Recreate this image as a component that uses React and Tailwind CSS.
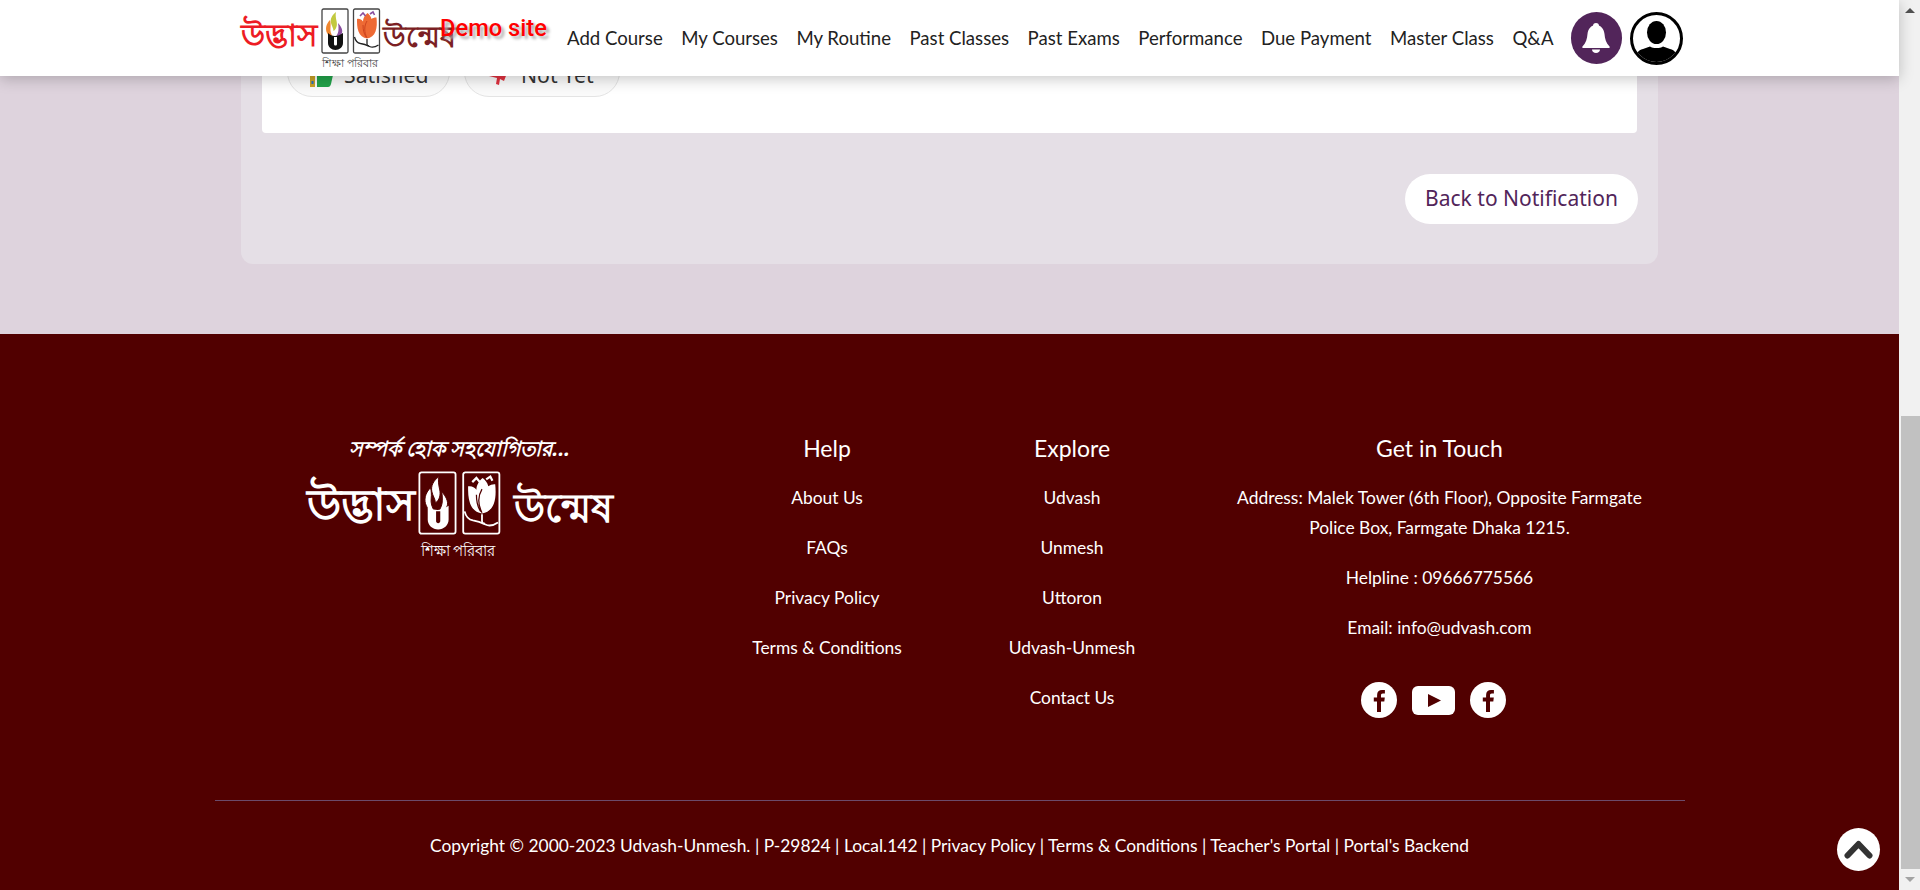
import React from 'react';

const navItems = ['Add Course', 'My Courses', 'My Routine', 'Past Classes', 'Past Exams', 'Performance', 'Due Payment', 'Master Class', 'Q&A'];
const helpLinks = ['About Us', 'FAQs', 'Privacy Policy', 'Terms & Conditions'];
const exploreLinks = ['Udvash', 'Unmesh', 'Uttoron', 'Udvash-Unmesh', 'Contact Us'];

// two framed marks of the logo, full colour in the header and plain white in the footer
const LogoBoxes = ({ frame, tone }) => {
    const gap = tone ? 'none' : '#510000';
    return (
        <svg className="h-full w-auto" viewBox="0 0 60 46" fill="none" xmlns="http://www.w3.org/2000/svg">
            <rect x="1" y="1" width="26" height="44" rx="1.5" stroke={frame} strokeWidth="1.3" />
            <rect x="32.5" y="1" width="26" height="44" rx="1.5" stroke={frame} strokeWidth="1.3" />
            <path d="M15 4c-4 3-6 7-5 11 .6 3 2.500 5 2.500 8 3-2 4-6 3-10-.6-3-1.200-6-.5-9Z" fill={tone ? '#c2c93f' : frame} stroke={gap} strokeWidth=".7" />
            <path d="M9 12c-4 4-5 9-3 13 1 2.500 3 3.500 6 4-2-3-3-6-2.500-9.500.2-2.500.2-5-.5-7.500Z" fill={tone ? '#f0872f' : frame} stroke={gap} strokeWidth=".7" />
            <path d="M17 15c3 3 5 7 4 10-.7 2.500-3 4-6.500 4.500 2-3 3-5.500 3-8.500 0-2 0-4-.5-6Z" fill={tone ? '#8a4f9e' : frame} stroke={gap} strokeWidth=".7" />
            <path d="M7 25c2 2 4 3 7 3s5-1 8-3v10c0 4-3.500 7-7.500 7S7 39 7 35V25Z" fill={tone ? '#111111' : frame} />
            <path d="M13 29v7c0 1 .7 1.500 1.500 1.500S16 37 16 36v-7h-3Z" fill={tone ? '#ffffff' : '#510000'} />
            <path d="M36 11c2.500-.5 4.500.5 6 2.500 0-3.500 2-6.500 4.500-8.500 2 1.500 3.500 3.500 4 6 1.500-1.200 3.500-1.700 5-1.500.5 5 .5 10-1 14-1.500 4-4.500 6.500-8.500 7-4-.5-7-3-8.500-7-1.500-4-1.500-8.500-1.500-12.500Z" fill={tone ? '#ee6a34' : frame} />
            <path d="M39 8l3-3 2.500 3M49 6l3-2 1.500 3" stroke={tone ? '#8a4f9e' : frame} strokeWidth="1.600" />
            <path d="M46 13c-3 5-3 11 0 17M42 17c0 5 1 9 3 12" stroke={tone ? '#c9401c' : '#510000'} strokeWidth=".9" />
            <path d="M46 31v5c0 1.500 1 2 2 1.500" stroke={tone ? '#222222' : frame} strokeWidth="1.300" />
            <path d="M33.500 29c1 4 3 6 6 6.500 3.500.5 6 1.500 9 3 3 1.500 6 .5 9-1.500" stroke={tone ? '#222222' : frame} strokeWidth="1.300" />
        </svg>
    );
};

const FacebookDisc = () => (
    <svg className="h-9 w-9" viewBox="0 0 36 36" xmlns="http://www.w3.org/2000/svg">
        <circle cx="18" cy="18" r="18" fill="#ffffff" />
        <path d="M20 30V19.500h3.300l.5-3.900H20v-2.300c0-1.100.3-1.900 1.900-1.900h2V8.100c-.4 0-1.500-.2-2.900-.2-2.900 0-4.900 1.800-4.900 5v2.700h-3.300v3.900H16V30h4Z" fill="#510000" />
    </svg>
);

const YoutubeBadge = () => (
    <svg className="h-[29px] w-[43px]" viewBox="0 0 43 29" xmlns="http://www.w3.org/2000/svg">
        <rect width="43" height="29" rx="6" fill="#ffffff" />
        <path d="M16 8l13 6.500L16 21V8Z" fill="#510000" />
    </svg>
);

function TopNav() {
    return (
        <header className="absolute inset-x-0 top-0 z-10 h-[76px] bg-white shadow-[0_3px_14px_rgba(0,0,0,0.22)]">
            <div className="flex h-full items-center pl-[241px]">
                <div className="relative h-full w-[326px] shrink-0">
                    <span className="absolute left-0 top-[19px] font-['Noto_Sans'] text-[31px] font-bold leading-none text-[#ed1c24]">উদ্ভাস</span>
                    <div className="absolute left-[80px] top-[8px] h-[46px]"><LogoBoxes frame="#444444" tone /></div>
                    <span className="absolute left-[142px] top-[21px] font-['Noto_Sans'] text-[29px] font-bold leading-none text-[#7b1f24]">উন্মেষ</span>
                    <span className="absolute left-[81px] top-[57px] font-['Noto_Sans'] text-[11px] leading-none text-[#444444]">শিক্ষা পরিবার</span>
                    <span className="absolute left-[199px] top-[17px] font-['Roboto'] text-[23.700px] font-medium leading-none text-[#ff0000] [text-shadow:3px_3px_3px_#b0b0b0]">Demo site</span>
                </div>
                <nav className="flex items-center gap-[18.500px] pt-[2px] text-[18.600px] text-[#222222]">
                    {navItems.map((item) => <a key={item} href="#">{item}</a>)}
                </nav>
                <span className="ml-[17px] flex h-[52px] w-[51px] items-center justify-center rounded-full bg-[#52255a]">
                    <svg className="h-[30px] w-[28px]" viewBox="0 0 28 30" fill="#ffffff" xmlns="http://www.w3.org/2000/svg">
                        <circle cx="14" cy="3" r="3" />
                        <path d="M14 2c5 0 8 4 8.500 9 .4 5 1.500 9 5 12.500.6.7.2 1.500-.6 1.500H1.100c-.8 0-1.200-.8-.6-1.500 3.500-3.500 4.600-7.500 5-12.500C6 6 9 2 14 2Z" />
                        <path d="M10 26.500h8c0 2-1.800 3.500-4 3.500s-4-1.500-4-3.500Z" />
                    </svg>
                </span>
                <span className="ml-[8px] flex h-[53px] w-[53px] items-end justify-center overflow-hidden rounded-full border-[3px] border-black bg-white">
                    <svg className="h-[47px] w-[47px]" viewBox="0 0 47 47" xmlns="http://www.w3.org/2000/svg">
                        <ellipse cx="23.500" cy="17.500" rx="9.500" ry="11.500" fill="#000000" />
                        <path d="M3 47c0-9 2-12 7-13l7-2.500c3 2 10 2 13 0l7 2.500c5 1 7 4 7 13H3Z" fill="#000000" />
                    </svg>
                </span>
            </div>
        </header>
    );
}

function FooterColumn({ title, links }) {
    return (
        <div className="col-span-2 flex flex-col items-center">
            <h4 className="text-[23px] leading-[31px]">{title}</h4>
            <ul className="mt-[22px] flex flex-col items-center gap-[26px] leading-[24px]">
                {links.map((link) => <li key={link}>{link}</li>)}
            </ul>
        </div>
    );
}

export default function App() {
    return (
        <div className="flex h-[890px] overflow-hidden bg-[#f1f1f1] font-['Lato'] text-[#222222]">
            <div className="relative w-[1899px] shrink-0">
                <TopNav />

                <main className="h-[334px] bg-[#ded3dd] px-[241px]">
                    <section className="h-[264px] rounded-b-[12px] bg-[#e5dfe6] px-[21px]">
                        <div className="flex h-[133px] items-end gap-[14px] rounded-b-[4px] bg-white px-[25px] pb-[36px] font-['Noto_Sans'] text-[21.200px] text-[#333333]">
                            <span className="flex h-[50px] w-[163px] items-center gap-[10px] rounded-full border border-[#e4e4e4] bg-[#fafafa] pl-[22px] pt-[6px]">
                                <svg className="h-[24px] w-[24px]" viewBox="0 0 24 24" xmlns="http://www.w3.org/2000/svg">
                                    <rect y="8" width="5" height="16" fill="#c9a227" />
                                    <rect x="1.500" y="18" width="2" height="3" fill="#2a6fbb" />
                                    <path d="M7 9l6-9c2 0 3 2 2 5l-1 3h8c2 0 2 2 1 4l-2 9c-.5 2-1.500 3-3 3H7V9Z" fill="#22a34a" />
                                </svg>
                                Satisfied
                            </span>
                            <span className="flex h-[50px] w-[156px] items-center gap-[10px] rounded-full border border-[#e4e4e4] bg-[#fafafa] pl-[22px] pt-[6px]">
                                <svg className="h-[24px] w-[24px]" viewBox="0 0 24 24" xmlns="http://www.w3.org/2000/svg">
                                    <path d="M2 13l20-8-5 13-4-2-1 6-3-1 1-6-8-2Z" fill="#e0313f" />
                                </svg>
                                Not Yet
                            </span>
                        </div>
                        <div className="mt-[41px] -mr-[1px] flex justify-end">
                            <a href="#" className="flex h-[50px] w-[233px] items-center justify-center rounded-full bg-white font-['Noto_Sans'] text-[21px] text-[#52255a]">Back to Notification</a>
                        </div>
                    </section>
                </main>

                <footer className="h-[556px] bg-[#510000] text-[17.400px] text-white">
                    <div className="mx-auto w-[1470px] pt-[99px]">
                        <div className="grid h-[367px] grid-cols-12">
                            <div className="col-span-4 -mt-[1px] flex flex-col items-center">
                                <p className="font-['Noto_Sans'] text-[20.600px] font-bold italic leading-[33px]">সম্পর্ক হোক সহযোগিতার...</p>
                                <div className="relative mt-[6px] flex h-[90px] w-[306px] justify-center">
                                    <span className="absolute left-0 top-[10px] font-['Noto_Sans'] text-[44px] font-bold leading-none">উদ্ভাস</span>
                                    <div className="h-[64px]"><LogoBoxes frame="#ffffff" /></div>
                                    <span className="absolute right-0 top-[16px] font-['Noto_Sans'] text-[40px] font-bold leading-none">উন্মেষ</span>
                                    <span className="absolute left-[114px] top-[72px] font-['Noto_Sans'] text-[15px] leading-none">শিক্ষা পরিবার</span>
                                </div>
                            </div>
                            <FooterColumn title="Help" links={helpLinks} />
                            <FooterColumn title="Explore" links={exploreLinks} />
                            <div className="col-span-4 flex flex-col items-center text-center">
                                <h4 className="text-[23px] leading-[31px]">Get in Touch</h4>
                                <p className="mt-[19px] w-[430px] leading-[30px]">Address: Malek Tower (6th Floor), Opposite Farmgate Police Box, Farmgate Dhaka 1215.</p>
                                <p className="mt-[23px] leading-[24px]">Helpline : 09666775566</p>
                                <p className="mt-[26px] leading-[24px]">Email: info@udvash.com</p>
                                <div className="mr-[13px] mt-[42px] flex items-center gap-[15px]">
                                    <FacebookDisc />
                                    <YoutubeBadge />
                                    <FacebookDisc />
                                </div>
                            </div>
                        </div>
                        <div className="border-t border-[#6b4a6a] pt-[33px] text-center leading-[24px]">
                            Copyright © 2000-2023 Udvash-Unmesh. | P-29824 | Local.142 | Privacy Policy | Terms &amp; Conditions | Teacher's Portal | Portal's Backend
                        </div>
                    </div>
                </footer>

                <button className="absolute bottom-[19px] right-[19px] flex h-[43px] w-[43px] items-center justify-center rounded-full bg-white">
                    <svg className="h-[19px] w-[29px]" viewBox="0 0 29 19" fill="none" xmlns="http://www.w3.org/2000/svg">
                        <path d="M3.500 15.500L14.500 4l11 11.500" stroke="#333333" strokeWidth="6" strokeLinecap="round" strokeLinejoin="round" />
                    </svg>
                </button>
            </div>

            <aside className="flex w-[21px] shrink-0 flex-col bg-[#f1f1f1]">
                <div className="flex h-[21px] items-center justify-center">
                    <span className="border-x-[5px] border-b-[5px] border-x-transparent border-b-[#505050]" />
                </div>
                <div className="ml-[2px] mt-[395px] h-[453px] bg-[#c1c1c1]" />
                <div className="flex h-[21px] items-center justify-center">
                    <span className="border-x-[5px] border-t-[5px] border-x-transparent border-t-[#a3a3a3]" />
                </div>
            </aside>
        </div>
    );
}
